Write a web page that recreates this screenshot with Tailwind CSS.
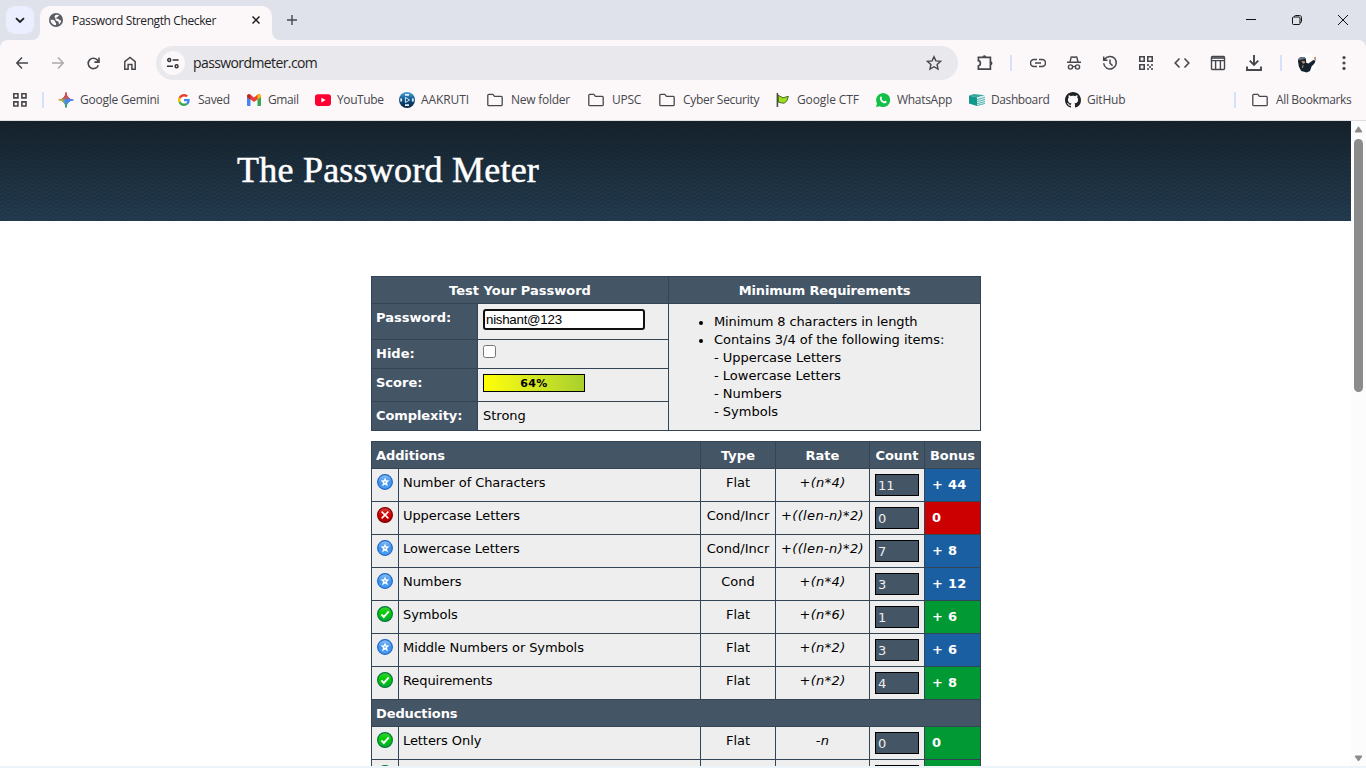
<!DOCTYPE html>
<html lang="en">
<head>
<meta charset="utf-8">
<title>Password Strength Checker</title>
<script src="https://cdn.jsdelivr.net/npm/@tailwindcss/browser@4"></script>
</head>
<body class="h-[768px] w-[1366px] overflow-hidden bg-white">
<svg class="absolute size-0">
  <defs>
    <linearGradient id="gb" x1="0" y1="0" x2="0" y2="1"><stop offset="0" stop-color="#8fc2f7"/><stop offset=".5" stop-color="#3f92ee"/><stop offset="1" stop-color="#4fa0f4"/></linearGradient>
    <linearGradient id="gg" x1="0" y1="0" x2="0" y2="1"><stop offset="0" stop-color="#3ad23a"/><stop offset=".45" stop-color="#00cc00"/><stop offset="1" stop-color="#00a83a"/></linearGradient>
    <linearGradient id="gr" x1="0" y1="0" x2="0" y2="1"><stop offset="0" stop-color="#d84040"/><stop offset=".5" stop-color="#d40000"/><stop offset="1" stop-color="#9c0000"/></linearGradient>
    <linearGradient id="gem" x1="0" y1="0" x2="1" y2="0"><stop offset="0" stop-color="#f7b917"/><stop offset=".3" stop-color="#7fae6a"/><stop offset=".5" stop-color="#4285f4"/><stop offset="1" stop-color="#3f86f8"/></linearGradient>
    <linearGradient id="gem2" x1="0" y1="0" x2="0" y2="1"><stop offset="0" stop-color="#ea4335"/><stop offset=".35" stop-color="#ea4335" stop-opacity=".8"/><stop offset=".5" stop-color="#ea4335" stop-opacity="0"/><stop offset=".65" stop-color="#34a853" stop-opacity="0"/><stop offset="1" stop-color="#34a853"/></linearGradient>
    <linearGradient id="aak" x1="0" y1="0" x2="0" y2="1"><stop offset="0" stop-color="#4aa6dc"/><stop offset=".5" stop-color="#0d4f86"/><stop offset="1" stop-color="#0a2340"/></linearGradient>
    <symbol id="i-star" viewBox="0 0 16 16"><circle cx="8" cy="8" r="7.4" fill="url(#gb)" stroke="#1a66c4" stroke-width="1.100"/><path d="M8 3.400l1.200 2.900 3.300.3-2.500 2.100.9 3.500L8 10.400l-2.900 1.800.9-3.500-2.500-2.100 3.300-.3z" fill="#fff"/><circle cx="8" cy="8.100" r=".8" fill="#4a9bf0"/></symbol>
    <symbol id="i-ok" viewBox="0 0 16 16"><circle cx="8" cy="8" r="7.4" fill="url(#gg)" stroke="#067a3c" stroke-width="1.200"/><path d="M4.400 8.400l2.400 2.600 5-5.600" fill="none" stroke="#fff" stroke-width="1.900"/></symbol>
    <symbol id="i-bad" viewBox="0 0 16 16"><circle cx="8" cy="8" r="7.4" fill="url(#gr)" stroke="#8a0000" stroke-width="1.200"/><path d="M4.600 4.600l6.800 6.800M11.400 4.600l-6.800 6.800" stroke="#fff" stroke-width="1.500"/></symbol>
    <symbol id="i-folder" viewBox="0 0 16 16"><path d="M.8 3.300c0-.6.4-1 1-1h4l1.700 2h6.700c.6 0 1 .4 1 1v7.400c0 .6-.4 1-1 1H1.800c-.6 0-1-.4-1-1z" fill="none" stroke="#46474c" stroke-width="1.300"/></symbol>
    <pattern id="weave" width="12" height="8" patternUnits="userSpaceOnUse"><path d="M0 4q3-4 6 0t6 0M0 8q3-4 6 0M6 0q3 4 6 0" fill="none" stroke="#000" stroke-opacity=".13" stroke-width="1"/></pattern>
  </defs>
</svg>
<div class="flex h-full flex-col font-['Open_Sans','Noto_Sans',sans-serif]">

  <!-- tab strip -->
  <div class="flex h-10 shrink-0 bg-[#dfe2eb]">
    <div class="ml-1.5 mt-1.5 flex size-7 items-center justify-center rounded-[9px] bg-[#ebeeff]">
      <svg class="size-[10px]" viewBox="0 0 10 10" fill="none" stroke="#1c1c1e" stroke-width="1.8"><path d="M1 3.200l4 3.800 4-3.800"/></svg>
    </div>
    <div class="relative ml-1.5 mt-1.5 flex h-[34px] w-[232px] items-center rounded-t-[10px] bg-[#fcf8fa]">
      <svg class="absolute -left-2 bottom-0 size-2" viewBox="0 0 8 8"><path d="M8 0v8H0a8 8 0 0 0 8-8z" fill="#fcf8fa"/></svg>
      <svg class="absolute -right-2 bottom-0 size-2" viewBox="0 0 8 8"><path d="M0 0v8h8a8 8 0 0 1-8-8z" fill="#fcf8fa"/></svg>
      <svg class="mb-[6px] ml-[9px] size-[14px] shrink-0" viewBox="0 0 14 14"><circle cx="7" cy="7" r="7" fill="#5a5d63"/><path d="M1.500 6.600c1.300.4 2.800.2 4 .8.8.5.3 1.600 1.200 2.100.6.4.6 1.500.2 2.800C3.900 12.400 1.600 9.800 1.500 6.600zM6.400 2.200c1.300-.6 2.700-.5 3.800.1-.2.8-1.200.8-1.400 1.500-.3.800-1.400.4-1.600 1.200-.1.600.5.800 1.100.7 1-.2 1.400.5 1.900 1.100.5.500 1.500.3 1.900.9-.2 1.600-1 2.900-2.200 3.700-.2-1.200.2-2.200-.7-3-.8-.6-2.300-.4-2.700-1.500-.3-.9.3-1.400-.2-2-.6-.5-1-.6-.7-1.400.2-.6.4-1 .8-1.300z" fill="#fcf8fa"/></svg>
      <span class="mb-[4px] ml-[9px] w-[145px] whitespace-nowrap text-[12px] tracking-[-0.390px] text-[#202124]">Password Strength Checker</span>
      <svg class="mb-[6px] ml-[35px] size-[8px] shrink-0" viewBox="0 0 8 8" stroke="#1c1c1e" stroke-width="1.500"><path d="M.5.5l7 7M7.500.5l-7 7"/></svg>
    </div>
    <svg class="ml-[15px] mt-[15px] size-[10px]" viewBox="0 0 10 10" stroke="#46474c" stroke-width="1.400"><path d="M5 0v10M0 5h10"/></svg>
    <div class="ml-auto mt-[14px] flex h-3 items-center gap-9 pr-[18px]">
      <svg class="size-[10px]" viewBox="0 0 10 10" stroke="#111" stroke-width="1"><path d="M0 4.500h10"/></svg>
      <svg class="size-[10px]" viewBox="0 0 10 10" fill="none" stroke="#111" stroke-width="1"><rect x=".5" y="2" width="7.500" height="7.500" rx="1"/><path d="M2.500 1.900V1.500c0-.6.4-1 1-1h4c1.200 0 2 .8 2 2v4.200c0 .5-.4.8-.9.8H7.800"/></svg>
      <svg class="size-[10px]" viewBox="0 0 10 10" stroke="#111" stroke-width="1"><path d="M0 0l10 10M10 0L0 10"/></svg>
    </div>
  </div>

  <!-- toolbar and bookmarks -->
  <div class="shrink-0 bg-[#dfe2eb]">
  <div class="h-[80px] rounded-t-[8px] bg-[#fcf8fa]">
    <div class="flex h-[46px] items-center">
      <svg class="ml-4 size-[12px]" viewBox="0 0 12 12" fill="none" stroke="#46474c" stroke-width="1.500"><path d="M6 .6L.8 6 6 11.400M.8 6H12"/></svg>
      <svg class="ml-6 size-[12px]" viewBox="0 0 12 12" fill="none" stroke="#a9a8ac" stroke-width="1.500"><path d="M6 .6L11.200 6 6 11.400M11.200 6H0"/></svg>
      <svg class="ml-[23px] size-[13px]" viewBox="0 0 13 13" fill="none" stroke="#46474c" stroke-width="1.600"><path d="M11.300 8.200A5.200 5.200 0 1 1 10.600 3.300L11.600 4.600M12 .5v4.600H7.400"/></svg>
      <svg class="ml-[23px] size-[14px]" viewBox="0 0 14 14" fill="none" stroke="#46474c" stroke-width="1.500"><path d="M1.800 5.600L7 1.500l5.200 4.100v7.600H8.900V8.400H5.100v4.800H1.800z"/></svg>
      <div class="ml-[19px] flex h-[34px] w-[802px] items-center rounded-full bg-[#e9e8ed]">
        <div class="ml-[5px] flex size-6 shrink-0 items-center justify-center rounded-full bg-[#fcf8fa]">
          <svg class="size-[12px]" viewBox="0 0 12 12" fill="none" stroke="#303136" stroke-width="1.400"><circle cx="2.200" cy="3" r="1.500"/><path d="M5.600 3H11.600M0 9.200h6"/><circle cx="9.600" cy="9.200" r="1.500"/></svg>
        </div>
        <span class="mb-px ml-2 w-[600px] whitespace-nowrap text-[14px] tracking-[-0.600px] text-[#1f1f23]">passwordmeter.com</span>
        <svg class="ml-auto mr-4 size-4" viewBox="0 0 16 16" fill="none" stroke="#46474c" stroke-width="1.400"><path d="M8 1.700l1.900 4.200 4.600.5-3.400 3.100.9 4.500L8 11.700 4 14l.9-4.500L1.500 6.400l4.600-.5z"/></svg>
      </div>
      <svg class="ml-[18px] size-[18px]" viewBox="0 0 18 18" fill="none" stroke="#46474c" stroke-width="1.700"><path d="M3 3.400h11.400v11.700H2.400v-3.200c2.600-.3 2.600-4.900 0-5.200V3.400h1"/><path d="M6.500 3.200a1.900 1.900 0 0 1 3.800 0zM14.600 7.300a1.900 1.900 0 0 1 0 3.800z" fill="#46474c" stroke="none"/></svg>
      <div class="ml-4 h-4 w-0.5 bg-[#d5e2fd]"></div>
      <svg class="ml-[18px] size-4" viewBox="0 0 16 16" fill="none" stroke="#46474c" stroke-width="1.500"><path d="M7 4.500H4a3.500 3.500 0 0 0 0 7h3M9 4.500h3a3.500 3.500 0 0 1 0 7H9M5 8h6"/></svg>
      <svg class="ml-5 size-4" viewBox="0 0 16 16" fill="none" stroke="#46474c" stroke-width="1.400"><path d="M1 7.300h14M4 7l1.200-5c.9-.5 1.600.3 2.800.3S9.900 1.500 10.800 2L12 7M7 12c.5-.8 1.500-.8 2 0"/><circle cx="4.500" cy="12" r="2.100"/><circle cx="11.500" cy="12" r="2.100"/></svg>
      <svg class="ml-5 size-4" viewBox="0 0 16 16" fill="none" stroke="#46474c" stroke-width="1.500"><path d="M2.600 4.400a6.300 6.300 0 1 1-.9 3.800M1.700 1.500v3.800h3.800M8 4.500V8.300l2.600 2.500"/></svg>
      <svg class="ml-5 size-4" viewBox="0 0 16 16" fill="none" stroke="#46474c" stroke-width="1.600"><path d="M1.800 1.800h4.400v4.400H1.800zM9.800 1.800h4.400v4.400H9.800zM1.800 9.800h4.400v4.400H1.800z"/><path d="M9 9h2v2H9zM11 11h2v2h-2zM13 9h2v2h-2zM9 13h2v2H9zM13 13h2v2h-2z" fill="#46474c" stroke="none" opacity=".8"/></svg>
      <svg class="ml-5 size-4" viewBox="0 0 16 16" fill="none" stroke="#46474c" stroke-width="1.600"><path d="M5.500 3.500L1.200 8l4.300 4.500M10.500 3.500L14.800 8l-4.300 4.500"/></svg>
      <svg class="ml-5 size-4" viewBox="0 0 16 16" fill="none" stroke="#46474c" stroke-width="1.400"><rect x="1.500" y="1.500" width="13" height="13" rx="1"/><path d="M1.500 3h13" stroke-width="1.600"/><path d="M1.500 5.600h13M5.600 5.600v9M10.400 5.600v9"/></svg>
      <svg class="ml-5 size-4" viewBox="0 0 16 16" fill="none" stroke="#46474c" stroke-width="1.900"><path d="M8 0v9.500M3.700 5.600L8 9.900l4.300-4.300M1 11.500V15h14v-3.500"/></svg>
      <div class="ml-[18px] h-4 w-0.5 bg-[#d5e2fd]"></div>
      <svg class="ml-[15px] size-5" viewBox="0 0 20 20"><circle cx="10" cy="10" r="10" fill="#fff"/><path d="M1.200 9.500C.4 6.300 2.200 4 5 4c2.800 0 3.900 1 4 2.800l.2 3 2.300.7 4.800-3.600 2.200.5c-.3 2.400-1.900 4.200-3.700 5.700l-1.800 5L9.800 19.600 4.200 18 1.800 13.600z" fill="#16222f"/><path d="M1.200 7.500C1.400 5 3 4 5 4c1.800 0 2.900.4 3.400 1.600L5.400 6.600z" fill="#687580"/><path d="M4.300 8.300l3.200-.6.6 2.200-2 .8zM17 4.500l1.700-1 .5 3-1.500 1.200z" fill="#c08a69"/><path d="M6.200 12l-.9 3" stroke="#b7913f"/></svg>
      <svg class="ml-[25px] h-4 w-1" viewBox="0 0 4 16" fill="#46474c"><circle cx="2" cy="2.600" r="1.600"/><circle cx="2" cy="8" r="1.600"/><circle cx="2" cy="13.400" r="1.600"/></svg>
    </div>
    <div class="flex h-7 items-center text-[12px] whitespace-nowrap text-[#46474c]">
      <svg class="ml-3 size-4 shrink-0" viewBox="0 0 16 16" fill="none" stroke="#46474c" stroke-width="1.600"><path d="M1.800 1.800h4.100v4.100H1.800zM9.900 1.800H14v4.100H9.900zM1.800 9.900h4.100V14H1.800zM9.900 9.900H14V14H9.900z"/></svg>
      <div class="ml-[14px] h-4 w-0.5 bg-[#d5e2fd]"></div>
      <div class="ml-[14px] flex w-[119px] items-center gap-[6px]">
        <svg class="size-4" viewBox="0 0 16 16"><path d="M8 .6C8.500 5 11 7.500 15.400 8 11 8.500 8.500 11 8 15.400 7.500 11 5 8.500.6 8 5 7.500 7.500 5 8 .6z" fill="url(#gem)" stroke="url(#gem)"/><path d="M8 .6C8.500 5 11 7.500 15.400 8 11 8.500 8.500 11 8 15.400 7.500 11 5 8.500.6 8 5 7.500 7.500 5 8 .6z" fill="url(#gem2)" stroke="url(#gem2)"/></svg>
        <span class="tracking-[-0.250px]">Google Gemini</span>
      </div>
      <div class="flex w-[69px] items-center gap-[7px]">
        <svg class="size-[14px] rounded-full bg-white" viewBox="-4 -4 56 56"><path fill="#EA4335" d="M24 9.500c3.540 0 6.710 1.220 9.210 3.600l6.850-6.850C35.900 2.380 30.470 0 24 0 14.620 0 6.510 5.380 2.560 13.220l7.980 6.190C12.430 13.720 17.740 9.500 24 9.500z"/><path fill="#4285F4" d="M46.980 24.550c0-1.570-.15-3.090-.38-4.550H24v9.020h12.940c-.58 2.960-2.260 5.480-4.780 7.180l7.730 6c4.510-4.180 7.090-10.360 7.090-17.650z"/><path fill="#FBBC05" d="M10.530 28.590c-.48-1.450-.76-2.990-.76-4.590s.27-3.140.76-4.590l-7.980-6.190C.92 16.460 0 20.120 0 24s.92 7.540 2.560 10.780l7.970-6.190z"/><path fill="#34A853" d="M24 48c6.480 0 11.930-2.130 15.890-5.810l-7.730-6c-2.150 1.450-4.920 2.300-8.160 2.300-6.260 0-11.570-4.220-13.470-9.910l-7.980 6.190C6.510 42.620 14.620 48 24 48z"/></svg>
        <span class="tracking-[-0.300px]">Saved</span>
      </div>
      <div class="flex w-[69px] items-center gap-[6px]">
        <svg class="size-4" viewBox="0 0 16 16"><path d="M1 4v9.200c0 .4.300.8.800.8H4.500V6.500z" fill="#4285f4"/><path d="M15 4v9.200c0 .4-.3.800-.8.800h-2.700V6.500z" fill="#34a853"/><path d="M1 4.200C1 2.400 3 1.600 4.300 2.600L8 5.500l3.700-2.900C13 1.600 15 2.400 15 4.200L14.800 5 8 10 1.200 5z" fill="#ea4335"/><path d="M1 4.200C1 2.600 2.700 1.800 4 2.500l.5.500v4.600L1 5z" fill="#c5221f"/><path d="M15 4.200c0-1.600-1.700-2.400-3-1.700l-.5.5v4.600L15 5z" fill="#fbbc04"/></svg>
        <span class="tracking-[-0.400px]">Gmail</span>
      </div>
      <div class="flex w-[84px] items-center gap-[6px]">
        <svg class="size-4" viewBox="0 0 16 16"><rect y="2.300" width="16" height="11.600" rx="2.800" fill="#ff0033"/><path d="M6.400 5.700v4.800L10.600 8.100z" fill="#fff"/></svg>
        <span class="tracking-[-0.400px]">YouTube</span>
      </div>
      <div class="flex w-[88px] items-center gap-[6px]">
        <svg class="size-4" viewBox="0 0 16 16"><circle cx="8" cy="8" r="8" fill="url(#aak)"/><path d="M6.400 5.400v5.200L10.600 8z" fill="none" stroke="#cfe8f8"/><path d="M6 2.800h4M6 13.200h4M2.200 6.500v3M13.800 6.500v3" stroke="#e4f2fb" stroke-width="1.800"/></svg>
        <span class="tracking-[-0.100px]">AAKRUTI</span>
      </div>
      <div class="flex w-[101px] items-center gap-2"><svg class="size-4"><use href="#i-folder"/></svg><span class="tracking-[-0.250px]">New folder</span></div>
      <div class="flex w-[71px] items-center gap-2"><svg class="size-4"><use href="#i-folder"/></svg><span class="tracking-[-0.250px]">UPSC</span></div>
      <div class="flex w-[117px] items-center gap-2"><svg class="size-4"><use href="#i-folder"/></svg><span class="tracking-[-0.300px]">Cyber Security</span></div>
      <div class="flex w-[100px] items-center gap-[7px]">
        <svg class="size-[14px]" viewBox="0 0 14 14"><path d="M2 2.200l5 2.600 5.400-1.500-1.400 4.400-3 2.600L2.600 9.300z" fill="#9be01c" stroke="#3e5a1a" stroke-width=".9"/><path d="M1.400 0v14" stroke="#47523c" stroke-width="1.600"/></svg>
        <span class="tracking-[-0.100px]">Google CTF</span>
      </div>
      <div class="flex w-[93px] items-center gap-[7px]">
        <svg class="size-[14px]" viewBox="0 0 14 14"><path d="M0 14l1-3.600A7 7 0 1 1 3.800 13.200z" fill="#12c048"/><path d="M4.700 3.500c.4-.2.7 0 .8.300l.5 1.200c.1.300-.5.800-.5 1 .5 1.200 1.400 2 2.600 2.500.3 0 .7-.8 1-.8l1.500.8c.2.500-.2 1.300-.7 1.500-2.600 1.300-6.700-2.600-6-5.300.1-.5.4-1 .8-1.200z" fill="#fff"/></svg>
        <span class="tracking-[-0.300px]">WhatsApp</span>
      </div>
      <div class="flex w-[96px] items-center gap-[6px]">
        <svg class="size-4" viewBox="0 0 16 16"><path d="M0 3.500L5 2l11 1.200-8 2.300z" fill="#36a89e"/><path d="M0 3.500l8 2V14l-8-2.500z" fill="#12978b"/><path d="M8 5.500l8-2.300v8.600L8 14z" fill="#d9f0ee"/><path d="M8 7.500l8-2M8 9.600l8-2M8 11.700l8-2M8 13.500l8-2" stroke="#35a79d" stroke-width=".8"/></svg>
        <span class="tracking-[-0.400px]">Dashboard</span>
      </div>
      <div class="flex items-center gap-[6px]">
        <svg class="size-4" viewBox="0 0 16 16"><path fill="#1f2328" d="M8 0C3.580 0 0 3.580 0 8c0 3.540 2.290 6.530 5.470 7.590.4.070.55-.17.55-.38 0-.19-.01-.82-.01-1.490-2.010.37-2.530-.49-2.690-.94-.09-.23-.48-.94-.82-1.130-.28-.15-.68-.52-.01-.53.63-.01 1.080.58 1.230.82.72 1.210 1.870.87 2.330.66.07-.52.28-.87.51-1.070-1.780-.2-3.640-.89-3.640-3.950 0-.87.31-1.590.82-2.150-.08-.2-.36-1.020.08-2.120 0 0 .67-.21 2.200.82.64-.18 1.320-.27 2-.27s1.360.09 2 .27c1.530-1.040 2.200-.82 2.200-.82.44 1.100.16 1.920.08 2.120.51.56.82 1.270.82 2.150 0 3.070-1.870 3.750-3.650 3.950.29.25.54.73.54 1.480 0 1.070-.01 1.930-.01 2.200 0 .21.15.46.55.38A8.010 8.010 0 0 0 16 8c0-4.420-3.580-8-8-8z"/></svg>
        <span class="tracking-[-0.200px]">GitHub</span>
      </div>
      <div class="ml-auto h-4 w-0.5 bg-[#d5e2fd]"></div>
      <div class="ml-4 flex w-[114px] items-center gap-2"><svg class="size-4"><use href="#i-folder"/></svg><span class="tracking-[-0.350px]">All Bookmarks</span></div>
    </div>
  </div>
  </div>
  <div class="h-px shrink-0 bg-[#dfdde0]"></div>

  <!-- page -->
  <div class="flex h-[645px] shrink-0">
    <div class="flex w-[1351px] flex-col overflow-hidden bg-white">
      <div class="relative flex h-[100px] shrink-0 bg-gradient-to-b from-[#15222c] to-[#243c50] pt-[29px] pl-[237px]">
        <svg class="absolute inset-0 size-full"><rect width="100%" height="100%" fill="url(#weave)"/></svg>
        <h1 class="relative h-10 font-['Liberation_Serif',serif] text-[36px] leading-[40px] tracking-[0.230px] whitespace-nowrap text-white [-webkit-text-stroke:0.5px_white]">The Password Meter</h1>
      </div>
      <div class="mt-[55px] ml-[371px] w-[610px] font-['DejaVu_Sans',sans-serif] text-[13px] leading-[18px] text-black">
        <div class="grid grid-cols-[105px_190px_311px] grid-rows-[26px_35px_28px_32px_28px] gap-px border border-[#334455] bg-[#334455]">
          <div class="col-span-2 bg-[#445566] pt-[5px] text-center font-bold text-white">Test Your Password</div>
          <div class="bg-[#445566] pt-[5px] text-center font-bold tracking-[-0.150px] text-white">Minimum Requirements</div>
          <div class="bg-[#445566] pt-[5px] pl-[4px] font-bold text-white">Password:</div>
          <div class="bg-[#eeeeee] pt-[5px] pl-[5px]"><div class="h-[21px] w-[162px] rounded-[3px] border-2 border-[#101010] bg-white pl-px font-['Liberation_Sans',sans-serif] text-[13.333px] leading-[17px] tracking-[-0.270px]">nishant@123</div></div>
          <div class="row-span-4 bg-[#eeeeee] pt-[9px] pl-[45px]">
            <ul>
              <li class="flex tracking-[-0.130px]"><span class="mt-[8px] mr-[11px] ml-[-15px] size-1 rounded-full bg-black"></span>Minimum 8 characters in length</li>
              <li class="flex tracking-[-0.030px]"><span class="mt-[8px] mr-[11px] ml-[-15px] size-1 rounded-full bg-black"></span>Contains 3/4 of the following items:</li>
              <li>- Uppercase Letters</li><li>- Lowercase Letters</li><li>- Numbers</li><li>- Symbols</li>
            </ul>
          </div>
          <div class="bg-[#445566] pt-[5px] pl-[4px] font-bold text-white">Hide:</div>
          <div class="bg-[#eeeeee] pt-[5px] pl-[5px]"><div class="size-[13px] rounded-[2.5px] border border-[#767676] bg-white"></div></div>
          <div class="bg-[#445566] pt-[5px] pl-[4px] font-bold text-white">Score:</div>
          <div class="bg-[#eeeeee] pt-[5px] pl-[5px]"><div class="h-[18px] w-[102px] border border-black bg-gradient-to-r from-[#ffff00] to-[#a8d02c] text-center text-[11px] leading-[17px] font-bold tracking-[0.400px]">64%</div></div>
          <div class="bg-[#445566] pt-[5px] pl-[4px] font-bold tracking-[-0.100px] text-white">Complexity:</div>
          <div class="bg-[#eeeeee] pt-[5px] pl-[5px]">Strong</div>
        </div>

        <div id="scores" class="mt-[10px] grid grid-cols-[26px_301px_74px_93px_54px_55px] gap-px border border-[#334455] bg-[#334455]">
          <div class="col-span-2 h-[26px] bg-[#445566] pt-[5px] pl-[4px] font-bold tracking-[-0.100px] text-white">Additions</div>
          <div class="bg-[#445566] pt-[5px] text-center font-bold text-white">Type</div>
          <div class="bg-[#445566] pt-[5px] text-center font-bold text-white">Rate</div>
          <div class="bg-[#445566] pt-[5px] text-center font-bold text-white">Count</div>
          <div class="bg-[#445566] pt-[5px] text-center font-bold text-white">Bonus</div>
        </div>
      </div>
    </div>
    <div class="flex w-[15px] flex-col items-center bg-[#fcfcfc] pt-[5px] pb-[4px]">
      <svg class="h-[7px] w-[9px]" viewBox="0 0 9 7"><path d="M4.500.8L8 6H1z" fill="#8b8b8b" stroke="#8b8b8b" stroke-linejoin="round"/></svg>
      <div class="mt-[6px] h-[253px] w-[9px] rounded-full bg-[#8b8b8b]"></div>
      <svg class="mt-auto h-[7px] w-[9px]" viewBox="0 0 9 7"><path d="M4.500 6L8 1H1z" fill="#8b8b8b" stroke="#8b8b8b" stroke-linejoin="round"/></svg>
    </div>
  </div>
  <div class="h-0.5 shrink-0 bg-[#ebf4f8]"></div>
</div>
<script>
const icons = { star: '#i-star', ok: '#i-ok', bad: '#i-bad' };
const fills = { star: 'bg-[#1b5fa3]', ok: 'bg-[#009933]', bad: 'bg-[#cc0000]' };
const rows = [
  ['star', 'Number of Characters', 'Flat', '+(n*4)', '11', '+ 44'],
  ['bad', 'Uppercase Letters', 'Cond/Incr', '+((len-n)*2)', '0', '0'],
  ['star', 'Lowercase Letters', 'Cond/Incr', '+((len-n)*2)', '7', '+ 8'],
  ['star', 'Numbers', 'Cond', '+(n*4)', '3', '+ 12'],
  ['ok', 'Symbols', 'Flat', '+(n*6)', '1', '+ 6'],
  ['star', 'Middle Numbers or Symbols', 'Flat', '+(n*2)', '3', '+ 6'],
  ['ok', 'Requirements', 'Flat', '+(n*2)', '4', '+ 8'],
  null,
  ['ok', 'Letters Only', 'Flat', '-n', '0', '0'],
  ['ok', '', '', '', '', '']
];
document.getElementById('scores').insertAdjacentHTML('beforeend', rows.map(r => r === null
  ? '<div class="col-span-6 h-[26px] bg-[#445566] pt-[5px] pl-[4px] font-bold tracking-[-0.100px] text-white">Deductions</div>'
  : `<div class="h-8 bg-[#eeeeee] pt-[5px] pl-[5px]"><svg class="size-4"><use href="${icons[r[0]]}"/></svg></div>
     <div class="bg-[#eeeeee] pt-[5px] pl-[4px] tracking-[-0.080px]">${r[1]}</div>
     <div class="bg-[#eeeeee] pt-[5px] text-center whitespace-nowrap">${r[2]}</div>
     <div class="bg-[#eeeeee] pt-[5px] text-center tracking-[0.350px] whitespace-nowrap italic">${r[3]}</div>
     <div class="bg-[#eeeeee] pt-[5px] pl-[5px]"><div class="h-[22px] w-[44px] border border-black bg-[#445566] pl-[2px] leading-[22px] text-[#eeeeee]">${r[4]}</div></div>
     <div class="${fills[r[0]]} pt-[7px] pl-[7px] font-bold tracking-[0.250px] text-white">${r[5]}</div>`).join(''));
</script>
</body>
</html>
